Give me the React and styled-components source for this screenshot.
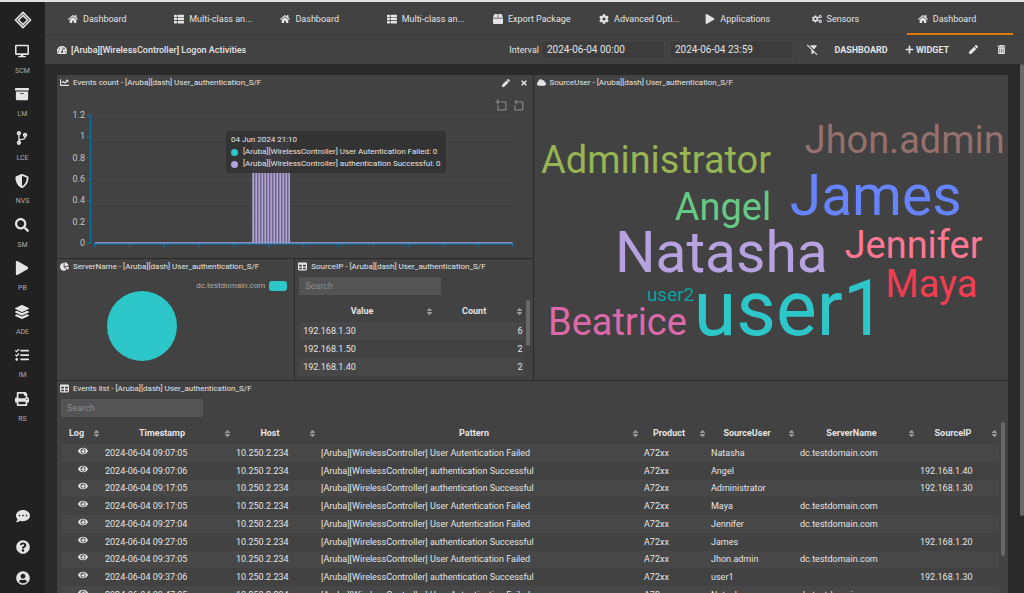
import React from 'react';
import styled, { createGlobalStyle } from 'styled-components';
import {
  FaArchive,
  FaBox,
  FaChartLine,
  FaChartPie,
  FaCloud,
  FaCodeBranch,
  FaCog,
  FaCogs,
  FaCommentDots,
  FaDesktop,
  FaEye,
  FaHome,
  FaLayerGroup,
  FaPen,
  FaPlay,
  FaPlus,
  FaPrint,
  FaQuestionCircle,
  FaSearch,
  FaShieldAlt,
  FaSort,
  FaTable,
  FaTachometerAlt,
  FaTasks,
  FaThList,
  FaTimes,
  FaTrashAlt,
  FaUserCircle,
} from 'react-icons/fa';
import { MdFilterAltOff } from 'react-icons/md';

const colors = {
  side: '#212121',
  page: '#2a2a2a',
  panel: '#424242',
  stripe: '#474747',
  text: '#e4e4e4',
  muted: '#adadad',
  accent: '#e07b0a',
  teal: '#2ec7c9',
  purple: '#b6a2de',
  axis: '#0d75ab',
};

const sizes = { tiny: '7px', small: '8px', medium: '9px', big: '10px' };

const GlobalStyle = createGlobalStyle`
  * {
    box-sizing: border-box;
  }

  body {
    margin: 0;
    background: ${colors.page};
    color: ${colors.text};
    font-family: Roboto, 'Liberation Sans', sans-serif;
    font-size: ${sizes.medium};
  }

  button, input {
    font: inherit;
    color: inherit;
  }

  button {
    padding: 0;
    border: 0;
    background: none;
    cursor: pointer;
  }

  svg {
    flex-shrink: 0;
  }
`;

const Layout = styled.div`
  display: flex;
  height: 100vh;
  border-top: 2px solid #dfe3e4;
  overflow: hidden;
`;

const Sidebar = styled.aside`
  flex: 0 0 45px;
  display: flex;
  flex-direction: column;
  align-items: center;
  background: ${colors.side};
  padding: 9px 0 8px;
`;

const Nav = styled.nav`
  display: grid;
  grid-auto-rows: 1fr;
  height: 391px;
  margin: 15px 0 auto;
`;

const NavItem = styled.a`
  display: flex;
  flex-direction: column;
  align-items: center;
  gap: 9px;
  color: ${colors.muted};
  font-size: ${sizes.tiny};
  line-height: 8px;
  text-decoration: none;

  svg {
    font-size: 14px;
    color: ${colors.text};
  }
`;

const NavFooter = styled.div`
  display: flex;
  flex-direction: column;
  gap: 17px;

  button {
    display: flex;
    font-size: 14px;
  }
`;

const Main = styled.div`
  flex: 1;
  min-width: 0;
  display: flex;
  flex-direction: column;
`;

const Tabs = styled.nav`
  display: grid;
  grid-template-columns: repeat(9, 1fr);
  height: 34px;
  padding: 0 11px 0 12px;
  background: ${colors.panel};
  border-bottom: 1px solid #3c3c3c;
`;

const Tab = styled.button`
  display: flex;
  align-items: center;
  gap: 5px;
  padding: 3px 11px 0;
  border-bottom: 2px solid ${({ $active }) => ($active ? colors.accent : 'transparent')};
  white-space: nowrap;

  svg {
    font-size: ${sizes.big};
  }
`;

const Toolbar = styled.header`
  display: flex;
  align-items: center;
  height: 28px;
  padding: 0 9px 1px 12px;
  background: ${colors.panel};

  h1 {
    display: flex;
    align-items: center;
    gap: 4px;
    margin: 0 auto 0 0;
    font-size: ${sizes.medium};
    font-weight: 500;
  }

  h1 svg {
    font-size: ${sizes.big};
  }

  label {
    margin-right: 2px;
  }
`;

const DateInput = styled.input`
  width: 124px;
  height: 19px;
  margin-right: 4px;
  padding: 0 5px;
  border: 1px solid #464646;
  background: #3d3d3d;
  font-size: ${sizes.big};
`;

const ToolButton = styled.button`
  display: flex;
  align-items: center;
  justify-content: center;
  gap: 2px;
  width: ${({ $width }) => $width || '28px'};
  font-weight: 700;

  svg {
    font-size: ${({ $icon }) => $icon || sizes.medium};
  }
`;

const Page = styled.div`
  flex: 1;
  min-height: 0;
  display: flex;
  overflow: hidden;
`;

const Board = styled.main`
  flex: 1;
  min-width: 0;
  display: grid;
  grid-template-columns: 1fr 1fr 2fr;
  grid-template-rows: 183px 121px auto;
  gap: 1px;
  padding: 11px 12px 0;
`;

const Panel = styled.section`
  grid-column: ${({ $col }) => $col};
  grid-row: ${({ $row }) => $row};
  position: relative;
  min-width: 0;
  overflow: hidden;
  background: ${colors.panel};
`;

const PanelHead = styled.header`
  display: flex;
  align-items: center;
  gap: 10px;
  height: 15px;
  padding: 0 5px 0 3px;

  h2 {
    display: flex;
    align-items: center;
    gap: 4px;
    margin: 0 auto 0 0;
    font-size: ${sizes.small};
    font-weight: 400;
    white-space: nowrap;
  }

  svg {
    font-size: ${sizes.medium};
  }

  button {
    display: flex;
  }

  button svg {
    font-size: ${sizes.small};
  }
`;

const Drawing = styled.svg`
  display: block;
  width: 100%;
  height: auto;
  max-height: 290px;
`;

const Tooltip = styled.div`
  position: absolute;
  left: 169px;
  top: 56px;
  padding: 3px 5px;
  border-radius: 3px;
  background: rgba(50, 50, 50, 0.9);
  font-size: ${sizes.small};
  line-height: 12px;
  white-space: nowrap;

  div {
    display: flex;
    align-items: center;
    gap: 5px;
  }
`;

const Dot = styled.i`
  width: 7px;
  height: 7px;
  border-radius: 50%;
  background: ${({ $color }) => $color};
`;

const Legend = styled.div`
  display: flex;
  align-items: center;
  justify-content: flex-end;
  gap: 4px;
  padding: 7px 7px 0;
  font-size: ${sizes.small};
  line-height: 10px;
  color: ${colors.muted};

  i {
    width: 18px;
    height: 10px;
    border-radius: 3px;
    background: ${colors.teal};
  }
`;

const Pie = styled.svg`
  display: block;
  width: 70px;
  height: 70px;
  margin-left: 21%;
`;

const Search = styled.input`
  display: block;
  width: 142px;
  height: 18px;
  margin: 3px 4px 5px;
  padding: 0 6px;
  border: 0;
  border-radius: 1px;
  background: #545454;

  &::placeholder {
    color: #8c8c8c;
    opacity: 1;
  }
`;

const TableWrap = styled.div`
  display: flex;
  align-items: flex-start;
  gap: 2px;
  padding: 0 3px 0 4px;
`;

const Table = styled.table`
  flex: 1;
  min-width: 0;
  height: ${({ $height }) => $height};
  table-layout: fixed;
  border-collapse: collapse;
  white-space: nowrap;

  th {
    height: 22px;
    padding: 0;
    font-weight: 700;
  }

  th > div {
    display: flex;
    align-items: center;
  }

  th span {
    flex: 1;
  }

  th svg {
    color: #999;
  }

  td {
    padding: 0 1px 0 4px;
    line-height: 12px;
  }

  tbody tr:nth-child(odd) {
    background: ${colors.stripe};
  }

  .num {
    text-align: right;
  }

  td button {
    display: flex;
    align-items: flex-start;
    margin: 0 auto;
    height: 14px;
  }

  td svg {
    font-size: ${sizes.big};
  }
`;

const Thumb = styled.div`
  width: 4px;
  height: ${({ $height }) => $height};
  border-radius: 2px;
  background: #696969;
`;

const navItems = [
  ['SCM', FaDesktop],
  ['LM', FaArchive],
  ['LCE', FaCodeBranch],
  ['NVS', FaShieldAlt],
  ['SM', FaSearch],
  ['PB', FaPlay],
  ['ADE', FaLayerGroup],
  ['IM', FaTasks],
  ['RS', FaPrint],
];

const tabs = [
  ['Dashboard', FaHome],
  ['Multi-class an...', FaThList],
  ['Dashboard', FaHome],
  ['Multi-class an...', FaThList],
  ['Export Package', FaBox],
  ['Advanced Opti...', FaCog],
  ['Applications', FaPlay],
  ['Sensors', FaCogs],
  ['Dashboard', FaHome],
];

const words = [
  { text: 'Jhon.admin', x: 271, y: 63, size: 38, color: '#95706d' },
  { text: 'Administrator', x: 7, y: 83, size: 38, color: '#97b552' },
  { text: 'James', x: 256, y: 125, size: 57, color: '#6684ff' },
  { text: 'Angel', x: 141, y: 130, size: 38, color: '#67c986' },
  { text: 'Natasha', x: 81, y: 182, size: 57, color: colors.purple },
  { text: 'Jennifer', x: 311, y: 168, size: 38, color: '#ff7792' },
  { text: 'Maya', x: 352, y: 207, size: 38, color: '#f53d52' },
  { text: 'user2', x: 113, y: 211, size: 19, color: '#07a2a4' },
  { text: 'user1', x: 160, y: 245, size: 77, color: colors.teal },
  { text: 'Beatrice', x: 14, y: 245, size: 38, color: '#dc69aa' },
];

const sources = [
  ['192.168.1.30', 6],
  ['192.168.1.50', 2],
  ['192.168.1.40', 2],
];

const columns = [
  ['Log', 40],
  ['Timestamp', 131],
  ['Host', 85],
  ['Pattern'],
  ['Product', 67],
  ['SourceUser', 89],
  ['ServerName', 120],
  ['SourceIP', 83],
];

const failed = '[Aruba][WirelessController] User Autentication Failed';
const success = '[Aruba][WirelessController] authentication Successful';

const events = [
  { time: '09:07:05', user: 'Natasha' },
  { time: '09:07:06', user: 'Angel', ip: '192.168.1.40' },
  { time: '09:17:05', user: 'Administrator', ip: '192.168.1.30' },
  { time: '09:17:05', user: 'Maya' },
  { time: '09:27:04', user: 'Jennifer' },
  { time: '09:27:05', user: 'James', ip: '192.168.1.20' },
  { time: '09:37:05', user: 'Jhon.admin' },
  { time: '09:37:06', user: 'user1', ip: '192.168.1.30' },
  { time: '09:47:05', user: 'Natasha' },
];

const Logo = () => (
  <svg width="18" height="18" viewBox="0 0 18 18" fill="none" stroke="#e4e4e4">
    <path d="M9 1.4 16.6 9 9 16.6 1.4 9z" strokeWidth="1.6" strokeLinejoin="round" />
    <path d="M9 4.4 13.6 9 9 13.6 4.4 9z" strokeWidth="1.5" />
    <path d="m5 3 4.5 4.5M13 15l-4.5-4.5" stroke="#777" strokeWidth=".5" />
  </svg>
);

const PanelTitle = ({ icon: Icon, name, children }) => (
  <PanelHead>
    <h2>
      <Icon />
      {name} - [Aruba][dash] User_authentication_S/F
    </h2>
    {children}
  </PanelHead>
);

const HeadCell = ({ label, width }) => (
  <th scope="col" style={{ width }}>
    <div>
      <span>{label}</span>
      <FaSort />
    </div>
  </th>
);

const EventsChart = () => {
  const yTicks = ['1.2', '1', '0.8', '0.6', '0.4', '0.2', '0'];
  const top = 25;
  const bottom = 153;
  const step = (bottom - top) / 6;
  const spikes = Array.from({ length: 13 }, (_, i) => 196 + i * 3);

  return (
    <Drawing viewBox="0 0 475 168" role="img" aria-label="Events count">
      {yTicks.map((label, i) => {
        const y = top + i * step;
        return (
          <g key={label}>
            <path d={`M38 ${y}H454`} stroke="#484848" />
            <path d={`M30 ${y}h4`} stroke={colors.axis} />
            <text x="28" y={y + 3} textAnchor="end" fontSize="9" fill="#c6c6c6">
              {label}
            </text>
          </g>
        );
      })}
      <path d={`M33.5 ${top}V${bottom}`} stroke={colors.axis} />
      <path d="M37 153.7H456" stroke={colors.axis} strokeWidth="1.5" />
      {Array.from({ length: 13 }, (_, i) => (
        <path key={i} d={`M${37.5 + i * 34.83} 154v3`} stroke={colors.axis} />
      ))}
      <path d="M38 152.5H455" stroke={colors.purple} />
      <rect x="195" y="46" width="37" height="107" fill="#8583a8" opacity=".6" />
      {spikes.map((x) => (
        <path key={x} d={`M${x} 46V153`} stroke={colors.purple} strokeWidth="1.5" />
      ))}
      <g fill="none" stroke="#9b9b9b" strokeWidth="5">
        <path
          transform="translate(438 9.5) scale(.18)"
          d="M0,13.5h26.9 M13.5,26.9V0 M32.1,13.5H58V58H13.5 V32.1"
        />
        <path
          transform="translate(455.5 9.5) scale(.18)"
          d="M22,1.4L9.9,13.5l12.3,12.3 M10.3,13.5H54.9v44.6 H10.3v-26"
        />
      </g>
    </Drawing>
  );
};

const WordCloud = () => (
  <Drawing viewBox="0 0 475 290" role="img" aria-label="SourceUser">
    {words.map(({ text, x, y, size, color }) => (
      <text key={text} x={x} y={y} fontSize={size} fill={color}>
        {text}
      </text>
    ))}
  </Drawing>
);

const EventsTable = () => (
  <TableWrap>
    <Table $height="182px">
      <thead>
        <tr>
          {columns.map(([label, width]) => (
            <HeadCell key={label} label={label} width={width} />
          ))}
        </tr>
      </thead>
      <tbody>
        {events.map(({ time, user, ip }, i) => (
          <tr key={i}>
            <td>
              <button aria-label="View log">
                <FaEye />
              </button>
            </td>
            <td>2024-06-04 {time}</td>
            <td>10.250.2.234</td>
            <td>{ip ? success : failed}</td>
            <td>A72xx</td>
            <td>{user}</td>
            <td>{ip ? '' : 'dc.testdomain.com'}</td>
            <td>{ip}</td>
          </tr>
        ))}
      </tbody>
    </Table>
    <Thumb $height="134px" />
  </TableWrap>
);

const App = () => (
  <Layout>
    <GlobalStyle />
    <Sidebar>
      <Logo />
      <Nav>
        {navItems.map(([label, Icon]) => (
          <NavItem key={label} href={`#${label}`}>
            <Icon />
            {label}
          </NavItem>
        ))}
      </Nav>
      <NavFooter>
        <button aria-label="Messages">
          <FaCommentDots />
        </button>
        <button aria-label="Help">
          <FaQuestionCircle />
        </button>
        <button aria-label="Account">
          <FaUserCircle />
        </button>
      </NavFooter>
    </Sidebar>

    <Main>
      <Tabs>
        {tabs.map(([label, Icon], i) => (
          <Tab key={i} $active={i === tabs.length - 1}>
            <Icon />
            {label}
          </Tab>
        ))}
      </Tabs>

      <Toolbar>
        <h1>
          <FaTachometerAlt />
          [Aruba][WirelessController] Logon Activities
        </h1>
        <label htmlFor="from">Interval</label>
        <DateInput id="from" defaultValue="2024-06-04 00:00" />
        <DateInput aria-label="Interval end" defaultValue="2024-06-04 23:59" />
        <ToolButton $width="30px" $icon="13px" aria-label="Clear filter">
          <MdFilterAltOff />
        </ToolButton>
        <ToolButton $width="68px">DASHBOARD</ToolButton>
        <ToolButton $width="64px">
          <FaPlus />
          WIDGET
        </ToolButton>
        <ToolButton aria-label="Edit">
          <FaPen />
        </ToolButton>
        <ToolButton aria-label="Delete">
          <FaTrashAlt />
        </ToolButton>
      </Toolbar>

      <Page>
        <Board>
          <Panel $col="1 / 3" $row="1">
            <PanelTitle icon={FaChartLine} name="Events count">
              <button aria-label="Edit widget">
                <FaPen />
              </button>
              <button aria-label="Remove widget">
                <FaTimes />
              </button>
            </PanelTitle>
            <EventsChart />
            <Tooltip>
              04 Jun 2024 21:10
              <div>
                <Dot $color={colors.teal} />
                {failed}: 0
              </div>
              <div>
                <Dot $color={colors.purple} />
                {success}: 0
              </div>
            </Tooltip>
          </Panel>

          <Panel $col="3" $row="1 / 3">
            <PanelTitle icon={FaCloud} name="SourceUser" />
            <WordCloud />
          </Panel>

          <Panel $col="1" $row="2">
            <PanelTitle icon={FaChartPie} name="ServerName" />
            <Legend>
              dc.testdomain.com
              <i />
            </Legend>
            <Pie viewBox="0 0 70 70">
              <circle cx="35" cy="35" r="35" fill={colors.teal} />
            </Pie>
          </Panel>

          <Panel $col="2" $row="2">
            <PanelTitle icon={FaTable} name="SourceIP" />
            <Search aria-label="Search source addresses" placeholder="Search" />
            <TableWrap>
              <Table $height="76px">
                <thead>
                  <tr>
                    <HeadCell label="Value" width="60%" />
                    <HeadCell label="Count" />
                  </tr>
                </thead>
                <tbody>
                  {sources.map(([ip, count]) => (
                    <tr key={ip}>
                      <td>{ip}</td>
                      <td className="num">{count}</td>
                    </tr>
                  ))}
                </tbody>
              </Table>
              <Thumb $height="46px" />
            </TableWrap>
          </Panel>

          <Panel $col="1 / 4" $row="3">
            <PanelTitle icon={FaTable} name="Events list" />
            <Search aria-label="Search events" placeholder="Search" />
            <EventsTable />
          </Panel>
        </Board>
        <Thumb $height="452px" />
      </Page>
    </Main>
  </Layout>
);

export default App;
